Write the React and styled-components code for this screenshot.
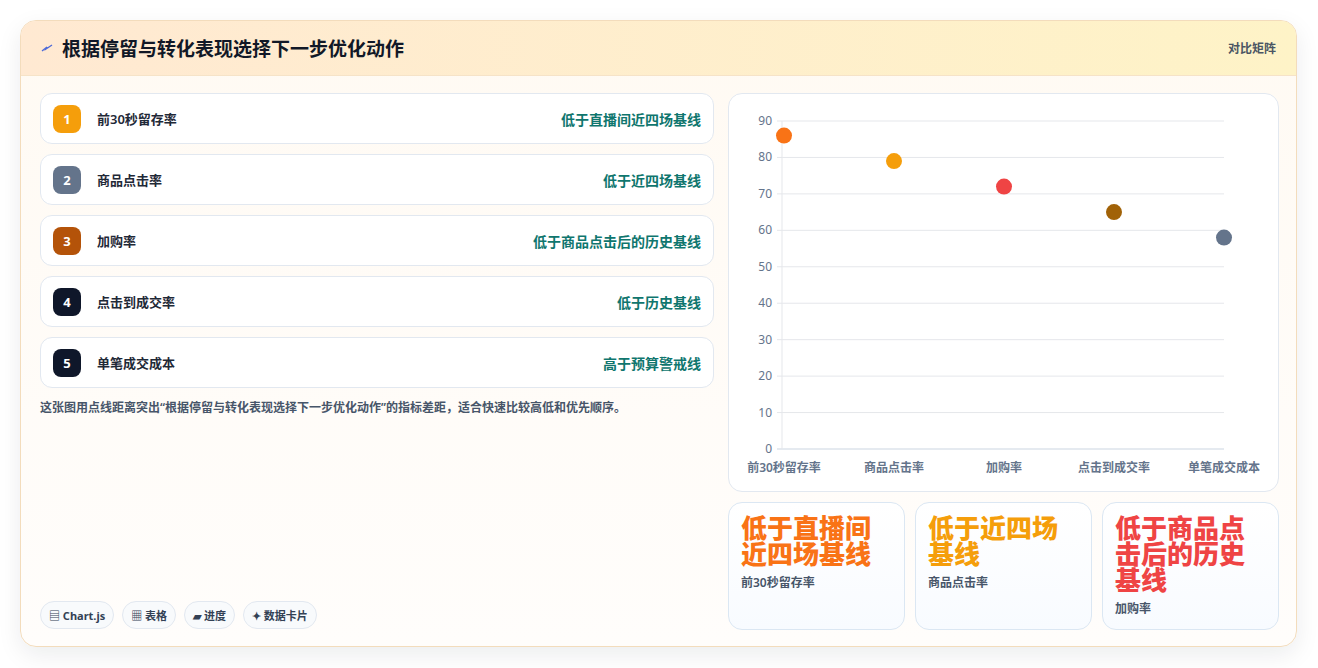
import React from "react";
import styled, { createGlobalStyle } from "styled-components";

const Global = createGlobalStyle`
  html,body{margin:0;background:#fff;}
  body{font-family:"Noto Sans","Noto Sans CJK SC",sans-serif;}
`;
const Page = styled.div`padding:20px 21px 21px 20px;height:668px;box-sizing:border-box;`;
const Card = styled.div`
  height:627px;box-sizing:border-box;border:1px solid #f3dcbc;border-radius:16px;
  background:linear-gradient(180deg,#fffaf3,#fffdfb);overflow:hidden;
  box-shadow:0 8px 24px rgba(15,23,42,.08);display:flex;flex-direction:column;
`;
const Header = styled.div`
  height:54px;flex:none;display:flex;align-items:center;justify-content:space-between;
  padding:0 20px;background:linear-gradient(90deg,#ffe9d2,#fef3c7);border-bottom:1px solid #f6e3c8;
`;
const Title = styled.h1`margin:0;font-size:19px;font-weight:700;color:#111827;display:flex;align-items:center;gap:9px;`;
const Tag = styled.span`font-size:12px;color:#4b5563;font-weight:600;`;
const Body = styled.div`flex:1;display:grid;grid-template-columns:674px 551px;gap:14px;padding:17px 19px 18px 19px;`;
const Left = styled.div`display:flex;flex-direction:column;gap:10px;`;
const Row = styled.div`
  height:51px;box-sizing:border-box;border:1px solid #e2e8f0;border-radius:12px;background:#fff;
  display:flex;align-items:center;padding:0 12px;gap:16px;
`;
const Badge = styled.div`
  width:28px;height:28px;border-radius:8px;background:${p=>p.c};color:#fff;font-size:13px;font-weight:700;
  display:flex;align-items:center;justify-content:center;
`;
const Name = styled.span`flex:1;font-size:13px;font-weight:600;color:#1f2937;`;
const Note = styled.span`font-size:14px;font-weight:700;color:#0f766e;`;
const Desc = styled.p`margin:0;font-size:12px;font-weight:600;color:#475569;`;
const Chips = styled.div`margin-top:auto;margin-bottom:1px;display:flex;gap:8px;`;
const Chip = styled.span`
  font-size:11px;font-weight:700;color:#334155;padding:5px 8px;border:1px solid #e2e8f0;border-radius:14px;background:#f8fafc;
`;
const Right = styled.div`display:flex;flex-direction:column;gap:10px;`;
const ChartBox = styled.div`height:399px;box-sizing:border-box;border:1px solid #e2e8f0;border-radius:14px;background:#fff;`;
const Cards = styled.div`display:grid;grid-template-columns:repeat(3,1fr);gap:10px;flex:1;`;
const Stat = styled.div`
  border:1px solid #dbe7f3;border-radius:14px;background:linear-gradient(180deg,#fff,#f8fbff);padding:12px 12px;
`;
const Big = styled.div`font-size:26px;line-height:26px;font-weight:800;color:${p=>p.c};`;
const Small = styled.div`margin-top:6px;font-size:12px;font-weight:600;color:#475569;`;

const rows=[["1","#f59e0b","前30秒留存率","低于直播间近四场基线"],["2","#64748b","商品点击率","低于近四场基线"],["3","#b45309","加购率","低于商品点击后的历史基线"],["4","#0f172a","点击到成交率","低于历史基线"],["5","#0f172a","单笔成交成本","高于预算警戒线"]];
const pts=[[86,"#f97316","前30秒留存率"],[79,"#f59e0b","商品点击率"],[72,"#ef4444","加购率"],[65,"#a16207","点击到成交率"],[58,"#64748b","单笔成交成本"]];
const Y=v=>355-v*328/90;

function Chart(){
  return <svg width="549" height="397" style={{display:"block"}}>
    {[0,10,20,30,40,50,60,70,80,90].map(v=><g key={v}>
      <line x1="48" x2="495" y1={Y(v)} y2={Y(v)} stroke={v===0?"#cbd5e1":"#e5e7eb"}/>
      <text x="43" y={Y(v)+4} textAnchor="end" fontSize="12" fill="#64748b">{v}</text></g>)}
    <line x1="53" x2="53" y1={Y(90)} y2="355" stroke="#e5e7eb"/>
    {pts.map((p,i)=><g key={i}>
      <circle cx={55+i*110} cy={Y(p[0])} r="8" fill={p[1]}/>
      <text x={55+i*110} y="378" textAnchor="middle" fontSize="12" fontWeight="600" fill="#64748b">{p[2]}</text></g>)}
  </svg>;
}

export default function App(){
  return <Page><Global/><Card>
    <Header><Title><svg width="12" height="10" viewBox="0 0 12 10"><path d="M1 8 L6 4 L5 6 L11 2" stroke="#4f6bd8" strokeWidth="1.4" fill="none"/></svg>根据停留与转化表现选择下一步优化动作</Title><Tag>对比矩阵</Tag></Header>
    <Body>
      <Left>
        {rows.map(r=><Row key={r[0]}><Badge c={r[1]}>{r[0]}</Badge><Name>{r[2]}</Name><Note>{r[3]}</Note></Row>)}
        <Desc>这张图用点线距离突出“根据停留与转化表现选择下一步优化动作”的指标差距，适合快速比较高低和优先顺序。</Desc>
        <Chips><Chip>▤ Chart.js</Chip><Chip>▦ 表格</Chip><Chip>▰ 进度</Chip><Chip>✦ 数据卡片</Chip></Chips>
      </Left>
      <Right>
        <ChartBox><Chart/></ChartBox>
        <Cards>
          <Stat><Big c="#f97316">低于直播间近四场基线</Big><Small>前30秒留存率</Small></Stat>
          <Stat><Big c="#f59e0b">低于近四场基线</Big><Small>商品点击率</Small></Stat>
          <Stat><Big c="#ef4444">低于商品点击后的历史基线</Big><Small>加购率</Small></Stat>
        </Cards>
      </Right>
    </Body>
  </Card></Page>;
}
